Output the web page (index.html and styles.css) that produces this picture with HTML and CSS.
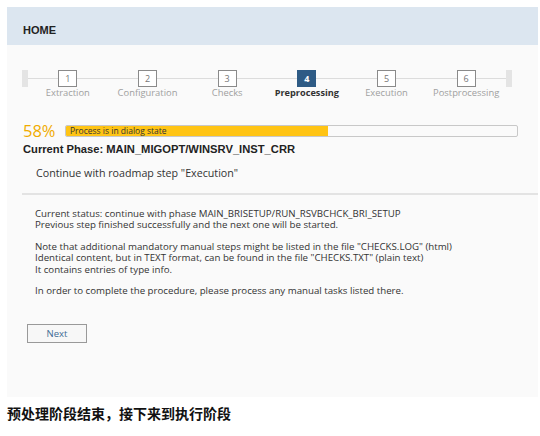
FILE: index.html
```html
<!DOCTYPE html>
<html>
<head>
<meta charset="utf-8">
<link rel="stylesheet" href="styles.css">
</head>
<body>
<div class="panel">
  <div class="header">HOME</div>
  <div class="content">
    <div class="roadmap">
      <div class="line"></div>
      <div class="end"></div>
      <div class="steps">
        <div class="step"><div class="box">1</div><div class="label">Extraction</div></div>
        <div class="step"><div class="box">2</div><div class="label">Configuration</div></div>
        <div class="step"><div class="box">3</div><div class="label">Checks</div></div>
        <div class="step active"><div class="box">4</div><div class="label">Preprocessing</div></div>
        <div class="step"><div class="box">5</div><div class="label">Execution</div></div>
        <div class="step"><div class="box">6</div><div class="label">Postprocessing</div></div>
      </div>
      <div class="end"></div>
    </div>
    <div class="progress-row">
      <div class="percent">58%</div>
      <div class="bar"><div class="fill" style="width:58%"></div><span class="bar-text">Process is in dialog state</span></div>
    </div>
    <div class="phase">Current Phase: MAIN_MIGOPT/WINSRV_INST_CRR</div>
    <div class="dialog">
      <div class="dialog-title">Continue with roadmap step "Execution"</div>
      <div class="dialog-body">
        <p>Current status: continue with phase MAIN_BRISETUP/RUN_RSVBCHCK_BRI_SETUP<br>Previous step finished successfully and the next one will be started.</p>
        <p>Note that additional mandatory manual steps might be listed in the file "CHECKS.LOG" (html)<br>Identical content, but in TEXT format, can be found in the file "CHECKS.TXT" (plain text)<br>It contains entries of type info.</p>
        <p>In order to complete the procedure, please process any manual tasks listed there.</p>
      </div>
    </div>
    <div class="actions"><button class="btn">Next</button></div>
  </div>
</div>
<div class="caption">预处理阶段结束，接下来到执行阶段</div>
</body>
</html>
```
FILE: styles.css
```css
html, body {
  margin: 0;
  padding: 0;
  background: #ffffff;
  font-family: "Open Sans", "Liberation Sans", sans-serif;
  color: #333333;
}
.panel {
  margin: 7px 2px 0 7px;
}
.header {
  height: 38px;
  background: #dce6f0;
  box-sizing: border-box;
  padding: 17px 0 0 16px;
  font-family: "Liberation Sans", Arial, sans-serif;
  font-weight: bold;
  font-size: 11px;
  line-height: 13px;
  color: #222;
}
.content {
  background: #fafafa;
  height: 352px;
  box-sizing: border-box;
  padding: 25px 0 0 15px;
}
.roadmap {
  position: relative;
  display: flex;
  width: 490px;
  height: 32px;
}
.roadmap .line {
  position: absolute;
  left: 6px;
  right: 6px;
  top: 8px;
  height: 1px;
  background: #dcdcdc;
}
.end {
  width: 6px;
  height: 17px;
  background: #e4e4e4;
}
.steps {
  position: relative;
  flex: 1;
  display: grid;
  grid-template-columns: repeat(6, 1fr);
}
.step {
  display: flex;
  flex-direction: column;
  align-items: center;
}
.box {
  width: 17px;
  height: 15px;
  border: 1px solid #8a8a8a;
  background: #fff;
  font-size: 9px;
  line-height: 15px;
  text-align: center;
  color: #777;
}
.label {
  margin-top: 0;
  font-size: 9.4px;
  line-height: 12px;
  color: #a0a0a0;
  white-space: nowrap;
}
.step.active .box {
  background: #2e5b85;
  border-color: #2e5b85;
  color: #fff;
  font-weight: bold;
}
.step.active .label {
  color: #333;
  font-weight: bold;
  font-size: 9.2px;
}
.progress-row {
  display: flex;
  align-items: center;
  margin-top: 21px;
  padding-left: 1px;
}
.percent {
  font-size: 16.5px;
  line-height: 16px;
  color: #f0ab00;
  width: 42px;
}
.bar {
  position: relative;
  width: 451px;
  height: 10px;
  border: 1px solid #c8c8c8;
  border-radius: 2px;
  background: #fafafa;
  overflow: hidden;
}
.fill {
  position: absolute;
  left: 0;
  top: 0;
  bottom: 0;
  background: #ffc414;
}
.bar-text {
  position: relative;
  display: block;
  padding-left: 4px;
  font-size: 8.5px;
  line-height: 10px;
  color: #333;
}
.phase {
  margin-top: 3px;
  padding-left: 1px;
  font-family: "Liberation Sans", Arial, sans-serif;
  font-weight: bold;
  font-size: 11.2px;
  line-height: 14px;
  color: #222;
}
.dialog-title {
  margin-top: 10px;
  padding: 0 0 12px 14px;
  font-size: 10.7px;
  line-height: 15px;
  border-bottom: 2px solid #e3e3e3;
}
.dialog-body {
  padding: 13px 0 0 13px;
  font-size: 9.7px;
  line-height: 11.3px;
  color: #333;
}
.dialog-body p {
  margin: 0 0 10.5px 0;
}
.actions {
  padding: 13px 0 0 5px;
}
.btn {
  width: 60px;
  height: 19px;
  border: 1px solid #999;
  background: #f7f7f7;
  color: #3e6a93;
  font-family: "Open Sans", "Liberation Sans", sans-serif;
  font-size: 9.5px;
  padding: 0;
}
.caption {
  margin: 7px 0 0 7px;
  font-family: "Noto Sans CJK SC", sans-serif;
  font-weight: bold;
  font-size: 14px;
  line-height: 18px;
  color: #111;
}
```
